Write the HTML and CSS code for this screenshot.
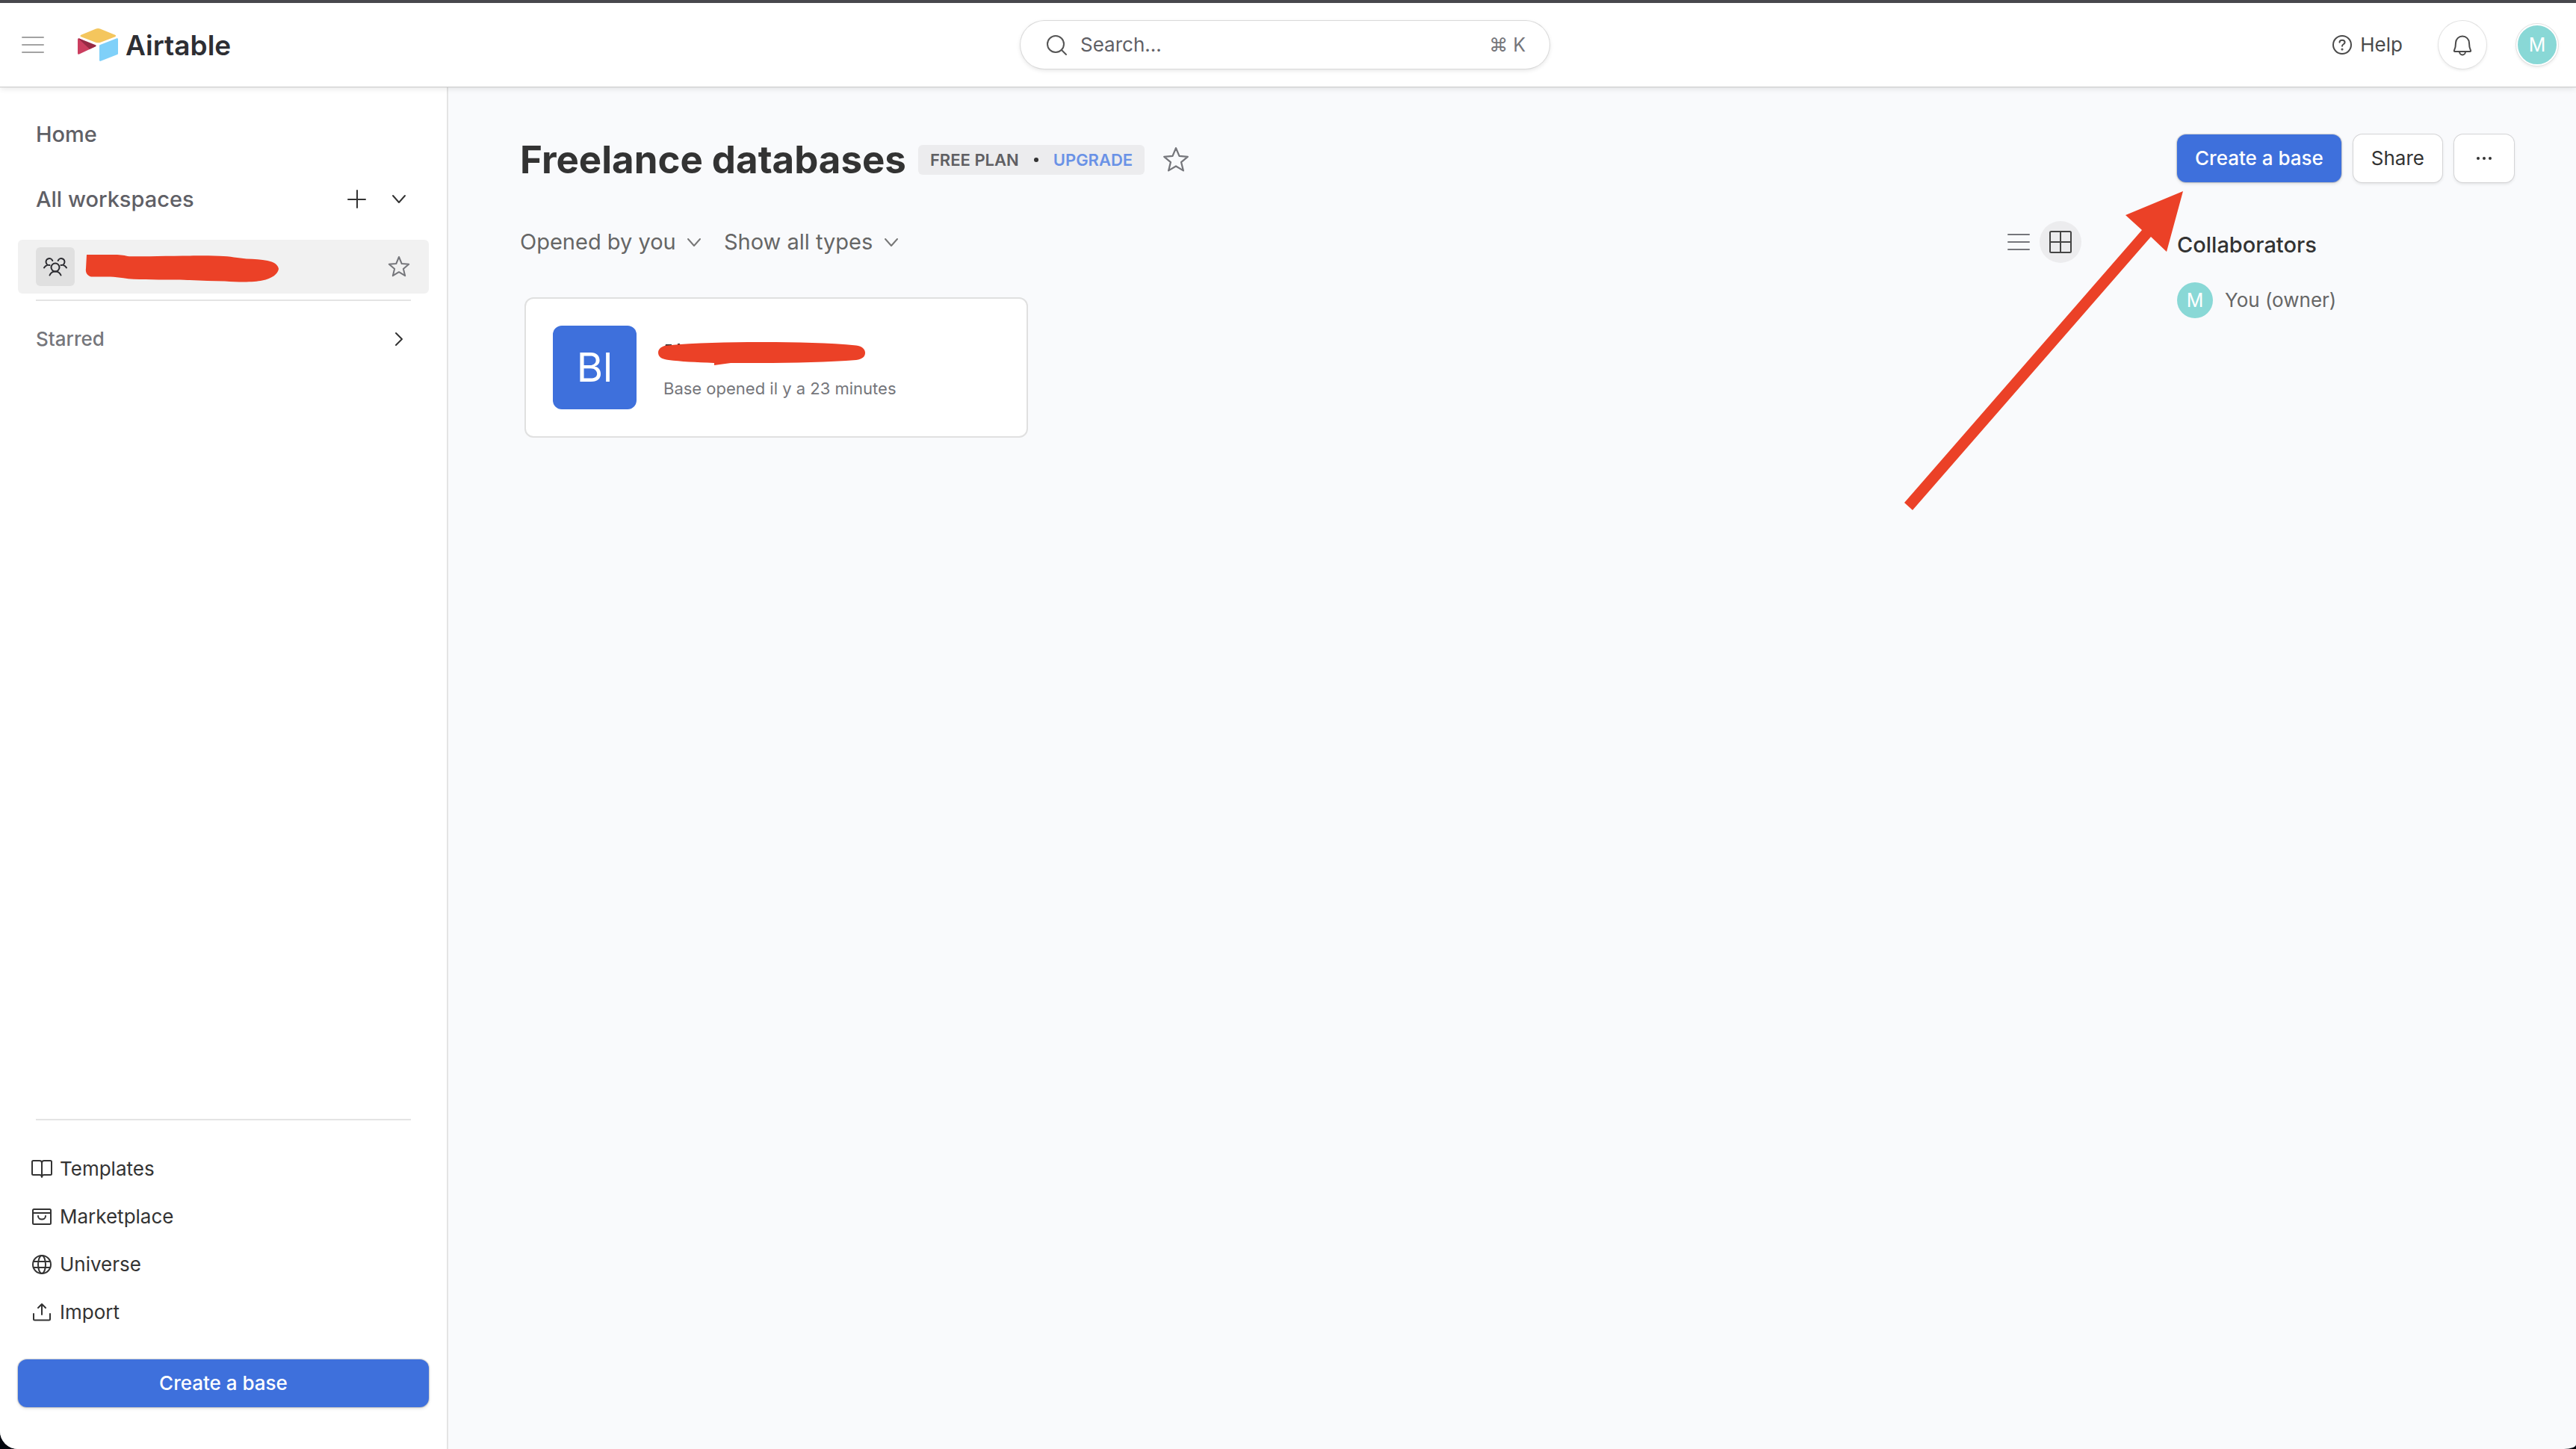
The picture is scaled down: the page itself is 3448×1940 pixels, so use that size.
FILE: index.html
```html
<!DOCTYPE html>
<html lang="en">
<head>
<meta charset="utf-8">
<meta name="viewport" content="width=device-width, initial-scale=1">
<title>Freelance databases - Airtable</title>
<link rel="stylesheet" href="styles.css">
</head>
<body>
<div class="app">
  <header class="topbar">
    <div class="topbar-left">
      <button class="icon-button menu-button" type="button" aria-label="Toggle sidebar">
        <svg class="icon" viewBox="0 0 32 32" stroke="#a3a3a3" stroke-width="2"><path d="M2 6h28M2 16h28M2 26h28"/></svg>
      </button>
      <a class="brand" href="#">
        <svg class="brand-mark" viewBox="0 0 54 46">
          <path fill="#f4c65d" d="M24.500 1.600 4.500 9.800c-1.300.6-1.300 2 0 2.500l20.100 7.600c1.700.6 3.600.6 5.300 0l20.200-7.600c1.300-.5 1.300-1.900 0-2.500L29.900 1.600c-1.700-.8-3.700-.8-5.400 0z"/>
          <path fill="#7fd0f9" d="M29 24.200v19.400c0 1 .8 1.500 1.700 1.200l22.300-8.700c.6-.2 1-.7 1-1.300V15.500c0-.9-.9-1.500-1.700-1.200L30 22.900c-.6.200-1 .7-1 1.300z"/>
          <path fill="#cb3e5f" d="M24.300 25 2 35.600c-.9.400-2-.1-2-1.100V15.600c0-.9.900-1.400 1.900-1z"/>
          <path fill="#972a44" d="M24.300 25 16 28.800.8 14.600c.4-.2.8-.2 1.300 0l21.800 8.700c.8.300 1 1.300.4 1.700z"/>
        </svg>
        <span class="brand-name">Airtable</span>
      </a>
    </div>
    <label class="search">
      <svg class="icon" viewBox="0 0 32 32" stroke="#555"><circle cx="15" cy="15" r="11"/><path d="m23 23 6 6"/></svg>
      <input class="search-input" type="text" placeholder="Search..." aria-label="Search">
      <span class="search-hint">⌘ K</span>
    </label>
    <div class="topbar-right">
      <button class="help-button" type="button">
        <svg class="icon" viewBox="0 0 32 32" stroke="#4a4a4a"><circle cx="16" cy="16" r="12"/><path d="M12.500 12.800c0-1.900 1.500-3.100 3.500-3.100s3.600 1.200 3.600 3c0 2.600-3.600 2.500-3.600 5"/><circle cx="16" cy="22" r=".6" fill="#4a4a4a"/></svg>
        Help
      </button>
      <button class="bell-button" type="button" aria-label="Notifications">
        <svg class="icon" viewBox="0 0 32 32" stroke="#4a4a4a"><path d="M7 13.500a9 9 0 0 1 18 0c0 5 1 8 2 10 .4.700 0 1.500-.9 1.500H5.900c-.9 0-1.300-.8-.9-1.500 1-2 2-5 2-10zM12 25a4 4.500 0 0 0 8 0"/></svg>
      </button>
      <button class="avatar avatar-ring" type="button" aria-label="Account">M</button>
    </div>
  </header>

  <div class="workspace">
    <aside class="sidebar">
      <nav class="nav">
        <a class="nav-row nav-heading" href="#">Home</a>
        <div class="nav-row nav-heading nav-spaced">
          <a class="nav-link" href="#">All workspaces</a>
          <button class="icon-button" type="button" aria-label="Create workspace"><svg class="icon" viewBox="0 0 32 32" stroke="#333"><path d="M16 4v23M4 16h23"/></svg></button>
          <button class="icon-button" type="button" aria-label="Collapse workspaces"><svg class="icon" viewBox="0 0 32 32" stroke="#333"><path d="m8 11 8 9 8-9"/></svg></button>
        </div>
        <div class="nav-row nav-selected">
          <a class="nav-link" href="#" aria-label="Current workspace">
            <span class="people"><svg class="icon" viewBox="0 0 32 32" stroke="#2b2b30"><circle cx="16" cy="17" r="5.500"/><path d="M8.500 27.500c1.200-3 4-5 7.500-5s6.300 2 7.500 5M1 17.500c1-1.800 2.300-3 4.500-3.600M8.500 14a4.500 4.500 0 1 1 3.800-6M31 17.500c-1-1.800-2.300-3-4.500-3.600M23.500 14a4.500 4.500 0 1 0-3.800-6"/></svg></span>
            <svg class="name-mark" viewBox="0 0 260 38"><path fill="#eb4127" d="M2 1h38c8 0 13 1.200 19 2.300 30 0 80-1.600 121-.6 14 .4 25 2.800 36 3.800 10 .2 20 1 28 2.500 8 1.400 14 5 15 11-1 7-9 13-22 15.500-10 2.300-30 2.500-50 .9-22 0-40-1.400-65-2-20 0-40 .3-57-.6-10-.7-18-2.200-27-3.100-8-.5-17 0-28-.2-6 0-10-4.500-9-11z"/></svg>
          </a>
          <button class="icon-button" type="button" aria-label="Star workspace"><svg class="icon" viewBox="0 0 32 32" stroke="#75767b"><path d="m16 3 3.700 9 9.500.7-7.300 6.200 2.300 9.300L16 23.200l-8.200 5 2.300-9.300-7.300-6.200 9.500-.7z"/></svg></button>
        </div>
        <hr class="rule">
        <div class="nav-row nav-starred">
          <a class="nav-link" href="#">Starred</a>
          <button class="icon-button" type="button" aria-label="Expand starred"><svg class="icon" viewBox="0 0 32 32" stroke="#333"><path d="m12 8 8 8-8 8"/></svg></button>
        </div>
      </nav>
      <footer class="sidebar-footer">
        <hr class="rule">
        <ul class="tools">
          <li><a class="tool" href="#"><svg class="icon" viewBox="0 0 32 32"><path d="M16 8c0-1.700-1-3-3-3H4.500C3.500 5 3 5.500 3 6.500v16c0 1 .5 1.500 1.500 1.500H13c2 0 3 1.300 3 3 0-1.700 1-3 3-3h8.500c1 0 1.500-.5 1.500-1.500v-16c0-1-.5-1.500-1.500-1.500H19c-2 0-3 1.300-3 3zM16 8v19"/></svg>Templates</a></li>
          <li><a class="tool" href="#"><svg class="icon" viewBox="0 0 32 32"><rect x="4" y="6" width="24" height="20" rx="1.500"/><path d="M4 11h24M11 15c0 6 10 6 10 0"/></svg>Marketplace</a></li>
          <li><a class="tool" href="#"><svg class="icon" viewBox="0 0 32 32"><circle cx="16" cy="16" r="12"/><ellipse cx="16" cy="16" rx="5" ry="12"/><path d="M5 12h22M5 20h22"/></svg>Universe</a></li>
          <li><a class="tool" href="#"><svg class="icon" viewBox="0 0 32 32"><path d="M16 19V5M11 10l5-5 5 5M5 18v7c0 1 .5 1.500 1.500 1.500h19c1 0 1.500-.5 1.500-1.500v-7"/></svg>Import</a></li>
        </ul>
        <button class="button button-primary button-wide" type="button">Create a base</button>
      </footer>
    </aside>

    <main class="main">
      <div class="title-row">
        <h1 class="title">Freelance databases</h1>
        <div class="plan"><span>FREE PLAN</span><span class="plan-dot"></span><a class="plan-upgrade" href="#">UPGRADE</a></div>
        <button class="icon-button title-star" type="button" aria-label="Star this workspace"><svg class="icon icon-large" viewBox="0 0 32 32" stroke="#75767b"><path d="m16 2 4 9.500 10 .8-7.700 6.500 2.500 10L16 23.500l-8.800 5.300 2.500-10L2 12.300l10-.8z"/></svg></button>
      </div>
      <div class="actions">
        <button class="button button-primary" type="button">Create a base</button>
        <button class="button" type="button">Share</button>
        <button class="button" type="button" aria-label="More options"><svg class="icon" viewBox="0 0 32 32"><g fill="#333" stroke="none"><circle cx="8" cy="16" r="2"/><circle cx="16" cy="16" r="2"/><circle cx="24" cy="16" r="2"/></g></svg></button>
        <svg class="arrow" viewBox="0 0 373 427"><path fill="#eb4127" d="M373 0 351 81 330 61 11 427 0 417 318 52 296 32z"/></svg>
      </div>

      <section class="bases">
        <div class="filters">
          <div class="filter">
            <select class="filter-select" aria-label="Sort bases"><option>Opened by you</option></select>
            <svg class="icon" viewBox="0 0 32 32" stroke="#777"><path d="m8 12 8 9 8-9"/></svg>
          </div>
          <div class="filter">
            <select class="filter-select" aria-label="Filter by type"><option>Show all types</option></select>
            <svg class="icon" viewBox="0 0 32 32" stroke="#777"><path d="m8 12 8 9 8-9"/></svg>
          </div>
          <div class="views">
            <button class="view-button" type="button" aria-label="List view"><svg class="icon" viewBox="0 0 32 32" stroke="#75767b"><path d="M2 6h28M2 16h28M2 26h28"/></svg></button>
            <button class="view-button view-active" type="button" aria-label="Grid view"><svg class="icon" viewBox="0 0 32 32" stroke="#444"><rect x="2" y="2" width="28" height="28" rx="1.500"/><path d="M16 2v28M2 16h28"/></svg></button>
          </div>
        </div>
        <div class="cards">
          <a class="card" href="#" aria-label="Base">
            <span class="card-icon">Bl</span>
            <span class="card-text">
              <svg class="card-mark" viewBox="0 0 278 32"><path fill="#333" d="M10 3h8v4H9zM26 2h3v3h-3zM50 24h8v3h-6z"/><path fill="#eb4127" d="M0 14C0 9 5 5 12 4.500 50 1 95 0 140 0s90 1 125 4.500c8 1 12 5 12 10s-4 8.500-12 9.500c-45 3.500-110 4.500-168 4L75 31v-3C50 27 30 26 14 24 5 23 0 20 0 14z"/></svg>
              <span class="card-meta">Base opened il y a 23 minutes</span>
            </span>
          </a>
        </div>
      </section>

      <aside class="people-panel">
        <h2 class="panel-title">Collaborators</h2>
        <div class="person"><span class="avatar">M</span>You (owner)</div>
      </aside>
    </main>
  </div>
</div>
</body>
</html>
```

FILE: styles.css
```css
* { box-sizing: border-box; }

html { background: #05080f; }

body {
  margin: 0;
  font-family: Inter, "Liberation Sans", sans-serif;
  font-size: 26px;
  line-height: 32px;
  color: #333;
}

a { color: inherit; text-decoration: none; }

button, input, select { font: inherit; color: inherit; }

.app {
  display: flex;
  flex-direction: column;
  min-height: 100vh;
  overflow: hidden;
  border-radius: 0 0 16px 24px / 0 0 6px 24px;
  background: #f9fafc;
}

.icon {
  display: block;
  flex: none;
  width: 32px;
  height: 32px;
  fill: none;
  stroke-width: 2;
  stroke-linecap: round;
  stroke-linejoin: round;
}

.icon-large { width: 36px; height: 36px; }

.icon-button {
  display: flex;
  padding: 0;
  border: 0;
  background: none;
}

/* Top bar */
.topbar {
  position: relative;
  display: grid;
  grid-template-columns: 1fr 708px 1fr;
  align-items: center;
  height: 116px;
  padding: 0 24px 0 16px;
  border-top: 4px solid #48484d;
  background: #fff;
  box-shadow: 0 1px 0 #c9c9c9, 0 2px 8px rgba(0, 0, 0, .12);
}

.topbar-left, .topbar-right, .brand { display: flex; align-items: center; }

.topbar-left { gap: 44px; padding-left: 12px; }

.brand { gap: 10px; }

.brand-mark { width: 54px; height: 46px; }

.brand-name { padding-top: 2px; font-size: 37px; font-weight: 600; color: #2d2e33; }

.search {
  display: flex;
  align-items: center;
  gap: 16px;
  height: 64px;
  padding: 0 32px;
  border-radius: 32px;
  background: #fff;
  box-shadow: 0 0 0 1px #d9d9d9, 0 2px 6px rgba(0, 0, 0, .12);
}

.search-input {
  flex: 1;
  min-width: 0;
  padding: 0;
  border: 0;
  outline: 0;
  background: none;
}

.search-input::placeholder { color: #5f6066; opacity: 1; }

.search-hint { font-size: 25px; color: #75767b; }

.topbar-right { justify-content: flex-end; gap: 40px; }

.help-button {
  display: flex;
  align-items: center;
  gap: 8px;
  padding: 0 8px;
  border: 0;
  background: none;
  color: #4a4a4a;
}

.bell-button {
  display: grid;
  place-items: center;
  width: 64px;
  height: 64px;
  padding: 0;
  border: 0;
  border-radius: 50%;
  background: #fff;
  box-shadow: 0 0 0 1px #e2e2e2, 0 2px 4px rgba(0, 0, 0, .1);
}

.avatar {
  display: grid;
  place-items: center;
  width: 48px;
  height: 48px;
  padding: 0;
  border-radius: 50%;
  background: #89d8d6;
  color: #fff;
  font-size: 25px;
}

.avatar-ring {
  width: 56px;
  height: 56px;
  border: 2px solid #fff;
  box-shadow: 0 0 0 1px #e2e2e2, 0 2px 4px rgba(0, 0, 0, .1);
}

/* Sidebar */
.workspace { display: flex; flex: 1; }

.sidebar {
  display: flex;
  flex-direction: column;
  justify-content: space-between;
  flex: none;
  width: 600px;
  padding: 29px 24px 56px;
  border-right: 2px solid #e4e4e4;
  background: #fff;
}

.nav-row {
  display: flex;
  align-items: center;
  gap: 24px;
  height: 70px;
  padding: 0 24px;
}

.nav-link { flex: 1; }

.nav-heading { font-size: 29px; font-weight: 500; color: #5f6066; }

.nav-spaced { margin: 17px 0 19px; }

.nav-selected { height: 72px; border-radius: 6px; background: #f1f1f1; }

.nav-selected .nav-link { display: flex; align-items: center; gap: 14px; }

.people {
  display: grid;
  place-items: center;
  width: 52px;
  height: 52px;
  border-radius: 6px;
  background: #e0e0e0;
}

.name-mark { width: 260px; height: 38px; margin-top: 4px; }

.rule {
  height: 2px;
  margin: 8px 24px 16px;
  border: 0;
  background: #e4e4e4;
}

.nav-starred { font-weight: 500; color: #75767b; }

.tools {
  display: grid;
  margin: 33px 0 31px;
  padding: 0;
  list-style: none;
}

.tool {
  display: flex;
  align-items: center;
  gap: 8px;
  height: 64px;
  padding: 0 16px;
}

.tool .icon { stroke: #333; }

/* Buttons */
.button {
  display: flex;
  align-items: center;
  justify-content: center;
  flex: none;
  height: 64px;
  padding: 0 24px;
  border: 0;
  border-radius: 12px;
  background: #fff;
  white-space: nowrap;
  box-shadow: 0 0 0 1px #d4d4d6, 0 2px 4px rgba(0, 0, 0, .12);
}

.button-primary {
  background: #3e70dc;
  color: #fff;
  font-weight: 500;
  box-shadow: 0 0 1px 1px rgba(0, 0, 0, .16), 0 2px 4px rgba(0, 0, 0, .12);
}

.button-wide { width: 100%; }

/* Main */
.main {
  display: grid;
  grid-template-columns: minmax(0, 1fr) 450px;
  grid-template-rows: 64px auto;
  gap: 48px 128px;
  align-content: start;
  flex: 1;
  padding: 64px 84px 64px 96px;
}

.title-row { display: flex; align-items: center; padding-top: 4px; }

.title {
  margin: 0 16px 0 0;
  font-size: 51px;
  line-height: 64px;
  font-weight: 700;
}

.plan {
  display: flex;
  align-items: center;
  gap: 20px;
  height: 40px;
  margin-right: 24px;
  padding: 0 16px;
  border-radius: 6px;
  background: #ececee;
  font-size: 22px;
  font-weight: 600;
  color: #5f5f63;
}

.plan-dot { width: 6px; height: 6px; border-radius: 50%; background: #333; }

.plan-upgrade { color: #6a92e6; }

.actions { position: relative; display: flex; gap: 16px; }

.arrow {
  position: absolute;
  top: 76px;
  right: 442px;
  width: 373px;
  height: 427px;
}

.filters { display: flex; align-items: center; gap: 24px; height: 64px; }

.filter { display: flex; align-items: center; gap: 8px; color: #666; }

.filter-select {
  appearance: none;
  padding: 0;
  border: 0;
  background: none;
  font-size: 29px;
}

.views { display: flex; margin-left: auto; }

.view-button {
  display: grid;
  place-items: center;
  width: 56px;
  height: 56px;
  padding: 0;
  border: 0;
  border-radius: 50%;
  background: none;
}

.view-active { background: #ececee; }

.cards {
  display: grid;
  grid-template-columns: repeat(3, 674px);
  margin: 42px 6px 0;
}

.card {
  display: flex;
  align-items: center;
  gap: 29px;
  height: 188px;
  padding: 0 36px;
  border: 2px solid #e0e0e0;
  border-radius: 12px;
  background: #fff;
}

.card-icon {
  display: grid;
  place-items: center;
  width: 112px;
  height: 112px;
  border-radius: 12px;
  background: #3e70dc;
  color: #fff;
  font-size: 54px;
}

.card-text { display: grid; gap: 14px; padding-top: 10px; }

.card-mark { width: 278px; height: 32px; }

.card-meta { padding-left: 7px; font-size: 22px; color: #75767b; }

.panel-title {
  margin: 20px 0 34px;
  font-size: 29px;
  line-height: 32px;
  font-weight: 500;
}

.person { display: flex; align-items: center; gap: 16px; color: #666; }
```
